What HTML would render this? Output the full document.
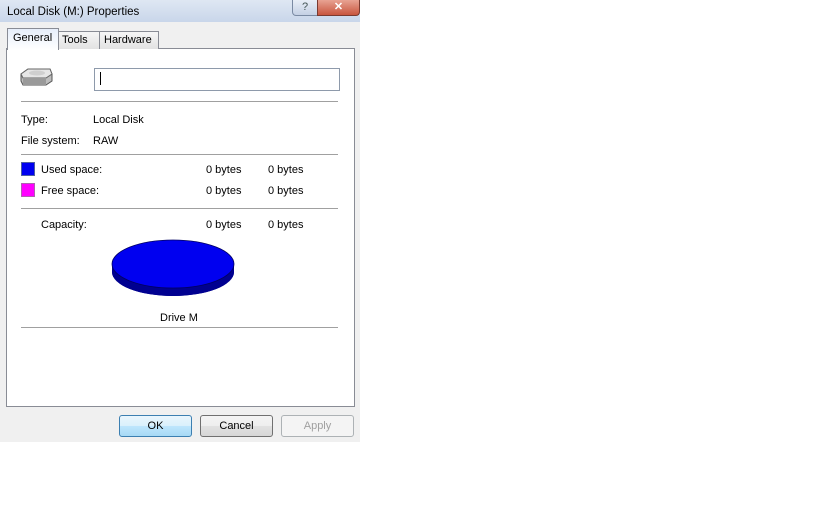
<!DOCTYPE html>
<html><head><style>
body{margin:0;width:840px;height:525px;background:#fff;position:relative;overflow:hidden;font-family:"Liberation Sans",sans-serif;font-size:11px;color:#000}
.a{position:absolute}
.t{position:absolute;white-space:nowrap;line-height:13px}
.hr{position:absolute;left:21px;width:317px;height:1px;background:#a0a0a0;border-bottom:1px solid #fff}
.btn{position:absolute;top:415px;width:71px;height:20px;border:1px solid #707070;border-radius:3px;background:linear-gradient(#f4f4f4,#eeeeee 50%,#e2e2e2 50%,#d6d6d6);text-align:center;line-height:21px;font-size:11px}
</style></head><body>
<div class="a" style="left:0;top:0;width:360px;height:442px;background:#f0f0f0"></div>
<div class="a" style="left:0;top:0;width:360px;height:22px;background:linear-gradient(#dfe7f3,#c9d6ea)"></div>
<div class="t" style="left:7px;top:6px;font-size:11.5px">Local Disk (M:) Properties</div>
<div class="a" style="left:292px;top:0;width:24px;height:15px;border:1px solid #7a8aa3;border-top:none;border-radius:0 0 0 4px;background:linear-gradient(#e8eef7,#c4d0e4);text-align:center;font-size:11px;color:#455;line-height:14px">?</div>
<div class="a" style="left:317px;top:0;width:41px;height:15px;border:1px solid #7a3a30;border-top:none;border-radius:0 0 4px 0;background:linear-gradient(#e8a393,#c8553e);text-align:center;color:#fff;font-weight:bold;line-height:14px">✕</div>
<div class="a" style="left:6px;top:48px;width:347px;height:357px;border:1px solid #898c95;background:#fff"></div>
<div class="a" style="left:58px;top:31px;width:40px;height:17px;border:1px solid #898c95;border-bottom:none;background:linear-gradient(#f6f6f6,#e2e2e2)"></div>
<div class="t" style="left:62px;top:34px">Tools</div>
<div class="a" style="left:99px;top:31px;width:58px;height:17px;border:1px solid #898c95;border-bottom:none;background:linear-gradient(#f6f6f6,#e2e2e2)"></div>
<div class="t" style="left:104px;top:34px">Hardware</div>
<div class="a" style="left:7px;top:28px;width:50px;height:21px;border:1px solid #898c95;border-bottom:none;background:linear-gradient(#e6eefa,#fff);"></div>
<div class="t" style="left:13px;top:32px">General</div>
<svg class="a" style="left:18px;top:66px" width="36" height="22" viewBox="0 0 36 22">
<path d="M3 8 L10 3 H32 L34 8 V15 L28 19 H5 L3 15 Z" fill="#bdbdbd" stroke="#555" stroke-width="1"/>
<path d="M3 8 L10 3 H32 L34 8 L28 12 H5 Z" fill="#e6e6e6" stroke="#666" stroke-width="1"/>
<rect x="5" y="12" width="23" height="7" fill="#9a9a9a"/>
<ellipse cx="19" cy="7" rx="8" ry="2.5" fill="#cfcfcf"/>
</svg>
<div class="a" style="left:94px;top:68px;width:244px;height:21px;border:1px solid #8e9aab;background:#fff"></div>
<div class="a" style="left:100px;top:72px;width:1px;height:13px;background:#000"></div>
<div class="hr" style="top:101px"></div>
<div class="t" style="left:21px;top:114px">Type:</div>
<div class="t" style="left:93px;top:114px">Local Disk</div>
<div class="t" style="left:21px;top:135px">File system:</div>
<div class="t" style="left:93px;top:135px">RAW</div>
<div class="hr" style="top:154px"></div>
<div class="a" style="left:21px;top:162px;width:12px;height:12px;background:#0000f0;border:1px solid #5060a0"></div>
<div class="t" style="left:41px;top:164px">Used space:</div>
<div class="t" style="left:206px;top:164px">0 bytes</div>
<div class="t" style="left:268px;top:164px">0 bytes</div>
<div class="a" style="left:21px;top:183px;width:12px;height:12px;background:#ff00ff;border:1px solid #b060b0"></div>
<div class="t" style="left:41px;top:185px">Free space:</div>
<div class="t" style="left:206px;top:185px">0 bytes</div>
<div class="t" style="left:268px;top:185px">0 bytes</div>
<div class="hr" style="top:208px"></div>
<div class="t" style="left:41px;top:219px">Capacity:</div>
<div class="t" style="left:206px;top:219px">0 bytes</div>
<div class="t" style="left:268px;top:219px">0 bytes</div>
<svg class="a" style="left:110px;top:236px" width="128" height="66" viewBox="0 0 128 66">
<path d="M2 28 V36 A61 24 0 0 0 124 36 V28 Z" fill="#000090"/>
<ellipse cx="63" cy="36" rx="61" ry="24" fill="#000090"/>
<ellipse cx="63" cy="28" rx="61" ry="24" fill="#0000f0" stroke="#000060" stroke-width="0.8"/>
</svg>
<div class="t" style="left:160px;top:312px">Drive M</div>
<div class="hr" style="top:327px"></div>
<div class="btn" style="left:119px;border-color:#3c7fb1;background:linear-gradient(#eaf6fd,#d9f0fc 50%,#bee6fd 50%,#a7d9f5)">OK</div>
<div class="btn" style="left:200px">Cancel</div>
<div class="btn" style="left:281px;border-color:#adb2b5;background:#f4f4f4;color:#a0a0a0">Apply</div>
</body></html>
